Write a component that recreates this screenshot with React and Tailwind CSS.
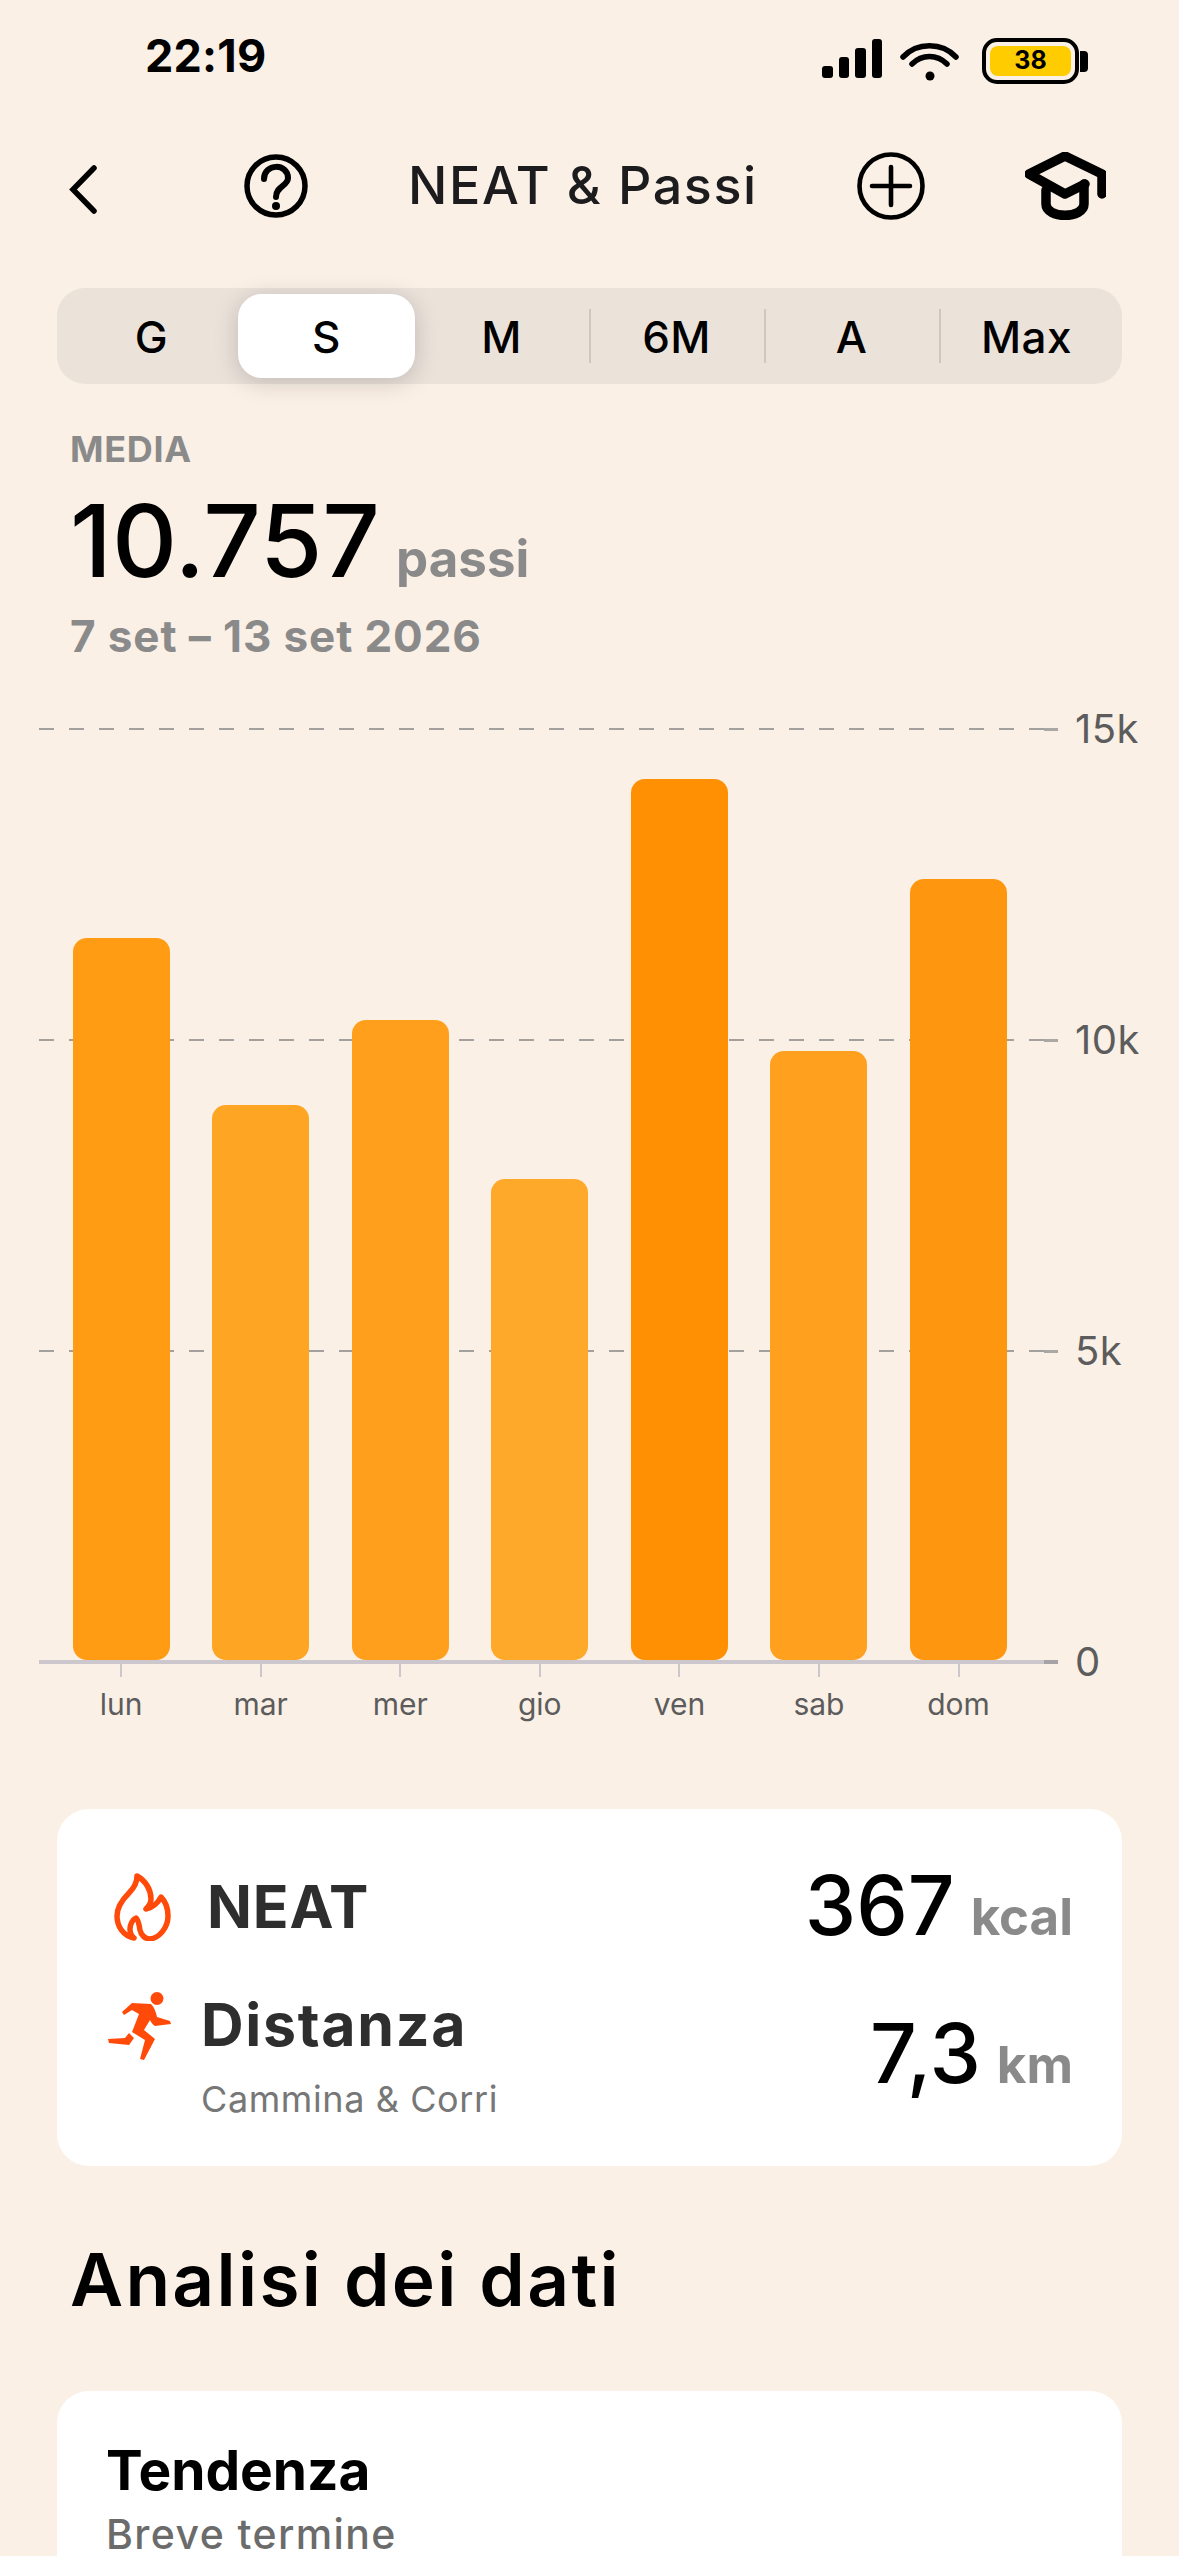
const tabs = ['G', 'S', 'M', '6M', 'A', 'Max'];

const bars = [
  { day: 'lun', height: 722, color: 'bg-[#ff9c14]' },
  { day: 'mar', height: 555, color: 'bg-[#ffa524]' },
  { day: 'mer', height: 640, color: 'bg-[#ff9f1c]' },
  { day: 'gio', height: 481, color: 'bg-[#ffa92b]' },
  { day: 'ven', height: 881, color: 'bg-[#ff8f03]' },
  { day: 'sab', height: 609, color: 'bg-[#ffa01f]' },
  { day: 'dom', height: 781, color: 'bg-[#ff960f]' },
];

const ticks = ['15k', '10k', '5k'];

function StatusBar() {
  return (
    <div className="flex h-[112px] items-start justify-between pl-[145px] pr-[91px] pt-[30px]">
      <span className="text-[45px] font-bold leading-[52px] tracking-[0.2px] text-black">22:19</span>
      <div className="flex items-start pt-[8px]">
        <div className="mt-[1px] flex h-[39px] items-end gap-[6px]">
          <span className="h-[12px] w-[10.5px] rounded-[3px] bg-black" />
          <span className="h-[21px] w-[10.5px] rounded-[3px] bg-black" />
          <span className="h-[30px] w-[10.5px] rounded-[3px] bg-black" />
          <span className="h-[39px] w-[10.5px] rounded-[3px] bg-black" />
        </div>
        <svg className="ml-[18px] mt-[5px]" width="59" height="38" viewBox="0 0 59 38" fill="none" stroke="black" strokeLinecap="round" strokeWidth="5.5">
          <path d="M3 14 C17 -1 42 -1 56 14" />
          <path d="M12 21 C22 11 37 11 47 21" />
          <circle cx="30" cy="33" r="4.5" fill="black" stroke="none" />
        </svg>
        <div className="ml-[23px] flex items-center">
          <div className="flex h-[46px] w-[97px] items-center justify-center rounded-[15px] border-[4px] border-black p-[4px]">
            <div className="flex h-full w-full items-center justify-center rounded-[8px] bg-[#ffcc00] text-[25px] font-bold text-black">38</div>
          </div>
          <span className="ml-[1px] h-[21px] w-[8px] rounded-r-[4px] bg-black" />
        </div>
      </div>
    </div>
  );
}

function Header() {
  return (
    <div className="relative mt-[36px] flex h-[76px] items-center">
      <svg className="ml-[68px] mt-[6px]" width="30" height="49" viewBox="0 0 30 49" fill="none" stroke="black" strokeWidth="5.5" strokeLinecap="round" strokeLinejoin="miter">
        <path d="M26 3 L5 24.5 L26 46" />
      </svg>
      <svg className="ml-[146px]" width="64" height="64" viewBox="0 0 64 64" fill="none" stroke="black" strokeWidth="5.5" strokeLinecap="round">
        <circle cx="32" cy="32" r="29" />
        <path d="M20 25 C20 9 44 9 44 24 C44 32 32 32 32 43" strokeWidth="6" />
        <circle cx="32" cy="52" r="4" fill="black" stroke="none" />
      </svg>
      <h1 className="absolute left-[408px] text-[52px] font-medium tracking-[1.6px] text-[#1c1c1e]">NEAT &amp; Passi</h1>
      <svg className="ml-[549px]" width="68" height="68" viewBox="0 0 68 68" fill="none" stroke="black" strokeWidth="4.6" strokeLinecap="round">
        <circle cx="34" cy="34" r="31.5" />
        <path d="M34 15 V53 M15 34 H53" />
      </svg>
      <svg className="ml-[100px]" width="81" height="68" viewBox="0 0 81 68" fill="none" stroke="black" strokeWidth="9.5" strokeLinecap="round" strokeLinejoin="round">
        <path d="M60 32 L40 42 L4 22 L40 4 L77 22 V42" />
        <path d="M21 38 V52 C21 67 59 67 59 52 V32" />
      </svg>
    </div>
  );
}

function Segments() {
  return (
    <div className="mx-[57px] mt-[64px] grid h-[96px] grid-cols-6 items-center rounded-[28px] bg-[#ebe2da] pl-[7px] pr-[8px]">
      {tabs.map((tab, i) => (
        <div key={tab} className="relative flex h-[84px] items-center justify-center">
          {i === 1 && <div className="absolute -inset-x-[1px] inset-y-0 rounded-[24px] bg-white shadow-[0_4px_24px_rgba(0,0,0,0.18)]" />}
          {i > 2 && <span className="absolute left-0 top-[15px] h-[54px] w-[2px] bg-[#cfc8c2]" />}
          <span className="relative mt-[2px] text-[44px] font-medium tracking-[0.4px] text-black">{tab}</span>
        </div>
      ))}
    </div>
  );
}

function Summary() {
  return (
    <div className="px-[70px] pt-[45px]">
      <p className="text-[36px] font-bold leading-[40px] tracking-[0.7px] text-[#8a8a8a]">MEDIA</p>
      <div className="mt-[16px] flex items-baseline gap-[16px]">
        <span className="text-[101px] font-medium leading-[110px] text-black">10.757</span>
        <span className="text-[51px] font-bold leading-[60px] text-[#8a8a8a]">passi</span>
      </div>
      <p className="mt-[16px] text-[44px] font-bold leading-[50px] tracking-[0.9px] text-[#8a8a8a]">7 set – 13 set 2026</p>
    </div>
  );
}

function Chart() {
  return (
    <div className="relative ml-[39px] mt-[68px] h-[1060px] w-[1101px]">
      {/* griglia */}
      <div className="absolute left-0 top-0 flex h-[933px] w-full flex-col justify-between">
        {ticks.map((label) => (
          <div key={label} className="flex h-0 items-center">
            <div className="h-[2px] w-[1005px] bg-[repeating-linear-gradient(90deg,#a3a09d_0_15px,transparent_15px_30px)]" />
            <div className="h-[3px] w-[14px] bg-[#aaa8a6]" />
            <span className="ml-[17px] text-[40px] tracking-[0.5px] text-[#5c5c5c]">{label}</span>
          </div>
        ))}
        <div className="flex h-0 items-center">
          <div className="h-[4px] w-[1005px] bg-[#cbc7cc]" />
          <div className="h-[4px] w-[14px] bg-[#a5a3a3]" />
          <span className="ml-[17px] text-[40px] text-[#5c5c5c]">0</span>
        </div>
      </div>

      {/* barre */}
      <div className="absolute left-[33.5px] top-0 flex gap-[42.6px]">
        {bars.map((bar) => (
          <div key={bar.day} className="flex w-[97px] flex-col items-center">
            <div className="flex h-[931px] items-end">
              <div className={`w-[97px] rounded-[14px] ${bar.color}`} style={{ height: bar.height }} />
            </div>
            <span className="mt-[3px] h-[14px] w-[2px] bg-[#cbc7cc]" />
            <span className="mt-[5px] text-[30px] text-[#5c5c5c]">{bar.day}</span>
          </div>
        ))}
      </div>
    </div>
  );
}

function FlameIcon() {
  return (
    <svg width="57" height="68" viewBox="0 0 57 68" fill="none" stroke="#ff4a0a" strokeWidth="5.5" strokeLinejoin="round" strokeLinecap="round">
      <path d="M20 65 C9 63 3 53 3 43 C3 33 9 26 15 20 C20 15 23 9 23 3 C32 8 37 17 37 26 C37 30 35 33 32 36 C38 35 44 30 47 24 C52 29 54 36 54 43 C54 55 45 65 36 66 C31 66 27 62 26 57 C25 51 24 46 22 45 C19 46 16 51 16 56 C16 60 17 63 20 65 Z" />
    </svg>
  );
}

function RunnerIcon() {
  return (
    <svg width="64" height="69" viewBox="0 0 64 69" fill="#ff4a0a">
      <circle cx="50" cy="6.5" r="6.5" />
      <path d="M15 20 L25 11 L44 12 C47 15 49 20 50 25 L63 29 L64 32 L48 34 C46 33 44 30 43 28 L37 38 L48 47 L37 68 L33 67 L38 48 L25 40 L32 22 L25 18 L17 23 Z" />
      <path d="M22 41 L27 46 L22 53 L2 51 L1 47 L18 46 Z" />
    </svg>
  );
}

function Metrics() {
  return (
    <div className="mx-[57px] mt-[20px] h-[357px] rounded-[32px] bg-white pl-[48px] pr-[49px] pt-[60px]">
      <div className="flex h-[76px] items-center justify-between">
        <div className="flex items-center gap-[36px] pl-[9px]">
          <FlameIcon />
          <span className="text-[59px] font-bold tracking-[0.8px] text-[#2e2e2e]">NEAT</span>
        </div>
        <div className="flex items-baseline gap-[16px]">
          <span className="text-[82px] font-medium leading-[76px] text-black">367</span>
          <span className="text-[51px] font-bold leading-[60px] text-[#8a8a8a]">kcal</span>
        </div>
      </div>
      <div className="mt-[45px] flex items-start justify-between">
        <div className="flex items-start gap-[30px] pl-[2px]">
          <div className="pt-[2px]"><RunnerIcon /></div>
          <div>
            <p className="text-[59px] font-bold leading-[70px] tracking-[1.7px] text-[#2e2e2e]">Distanza</p>
            <p className="mt-[15px] text-[36px] leading-[48px] tracking-[0.6px] text-[#777777]">Cammina &amp; Corri</p>
          </div>
        </div>
        <div className="flex items-baseline gap-[16px] pt-[26px]">
          <span className="text-[82px] font-medium leading-[76px] text-black">7,3</span>
          <span className="text-[51px] font-bold leading-[60px] text-[#8a8a8a]">km</span>
        </div>
      </div>
    </div>
  );
}

export default function App() {
  return (
    <div className="relative h-[2556px] w-[1179px] overflow-hidden bg-[#faf0e6] [font-family:Inter,sans-serif]">
      <StatusBar />
      <Header />
      <Segments />
      <Summary />
      <Chart />
      <Metrics />
      <h2 className="mx-[70px] mt-[69px] text-[73px] font-semibold leading-[90px] tracking-[2.3px] text-black">Analisi dei dati</h2>
      <div className="mx-[57px] mt-[66px] h-[165px] rounded-t-[32px] bg-white px-[49px] pt-[48px]">
        <p className="text-[55px] font-bold leading-[62px] text-black">Tendenza</p>
        <p className="mt-[13px] text-[41px] font-medium leading-[40px] tracking-[1.4px] text-[#6b6b6b]">Breve termine</p>
      </div>
    </div>
  );
}
